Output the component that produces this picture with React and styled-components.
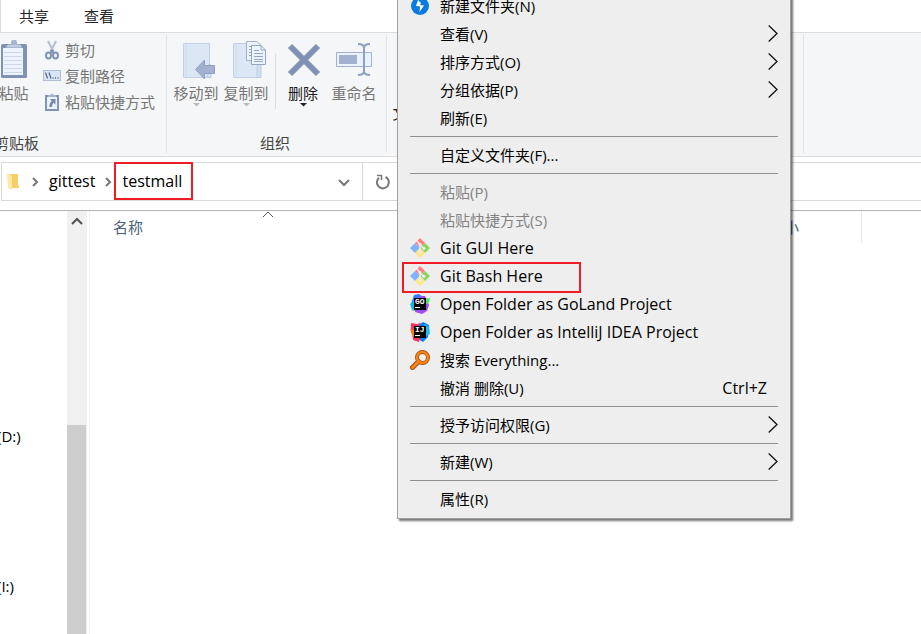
import React from "react";
import styled, { createGlobalStyle } from "styled-components";

const GlobalStyle = createGlobalStyle`
  *, *::before, *::after { box-sizing: border-box; }
  html, body, #root { height: 100%; }
  body {
    margin: 0;
    overflow: hidden;
    background: #fff;
    color: #000;
    font: 15px/20px "Open Sans", "Noto Sans CJK SC", sans-serif;
  }
  button {
    font: inherit;
    color: inherit;
    background: none;
    border: 0;
    padding: 0;
    margin: 0;
    text-align: left;
    white-space: nowrap;
  }
  svg { display: block; flex: none; }
`;

const Window = styled.div`
  position: relative;
  display: flex;
  flex-direction: column;
  height: 100%;
  overflow: hidden;
`;

const Tabs = styled.nav`
  display: flex;
  flex: none;
  gap: 35px;
  height: 33px;
  padding-left: 18px;
  border-left: 1px solid #dadbdc;
  border-bottom: 1px solid #dadbdc;
  color: #262626;
`;

const Tab = styled.button`
  height: 32px;
`;

const Ribbon = styled.div`
  display: flex;
  flex: none;
  height: 124px;
  padding: 2px 0 3px;
  background: #f5f6f7;
  border-bottom: 1px solid #dadbdc;
`;

const Group = styled.section`
  display: flex;
  flex-direction: column;
  justify-content: space-between;
  flex: none;
  width: ${(p) => p.$width}px;
  margin-left: ${(p) => (p.$cut ? -6 : 0)}px;
  border-right: 1px solid #e2e3e4;
`;

const GroupBody = styled.div`
  display: flex;
  justify-content: ${(p) => (p.$spread ? "space-between" : "flex-start")};
  padding: 3px ${(p) => (p.$spread ? 11 : 3)}px 0 3px;
`;

const GroupLabel = styled.div`
  height: 20px;
  padding-right: 3px;
  color: #444;
  text-align: ${(p) => (p.$start ? "left" : "center")};
`;

const LargeButton = styled.button`
  display: flex;
  flex-direction: column;
  align-items: center;
  width: ${(p) => p.$width}px;
  margin-left: ${(p) => p.$gap || 0}px;
  color: ${(p) => (p.$active ? "#1a1a1a" : "#767676")};
  svg:first-child { margin: 2px 0 4px; }
`;

const LargeLabel = styled.span`
  height: 20px;
`;

const SmallList = styled.div`
  display: flex;
  flex-direction: column;
  gap: 6px;
  margin: 2px 0 0 13px;
`;

const SmallButton = styled.button`
  display: flex;
  align-items: center;
  gap: 4px;
  height: 20px;
  color: #767676;
`;

const Rule = styled.div`
  width: 1px;
  height: 55px;
  margin: 16px 0 0 4px;
  background: #dcdddf;
`;

const AddressRow = styled.div`
  display: flex;
  flex: none;
  height: 39px;
  margin: 5px 0 9px 1px;
  border: 1px solid #d9d9d9;
  border-right: 0;
`;

const AddressBar = styled.div`
  display: flex;
  align-items: center;
  width: 361px;
  padding: 0 13px 0 5px;
  border-right: 1px solid #d9d9d9;
`;

const Crumbs = styled.div`
  display: flex;
  flex: 1;
  align-items: center;
  height: 37px;
  padding-left: 10px;
  font-size: 16px;
`;

const Crumb = styled.button`
  align-self: flex-start;
  height: 36px;
  padding: 0 9px 0 8px;
`;

const MarkedCrumb = styled(Crumb)`
  width: 79px;
  height: 38px;
  padding: 0 6px;
  margin-top: -1px;
  border: 2px solid #ee1c24;
`;

const RefreshButton = styled.button`
  padding-left: 12px;
`;

const Content = styled.main`
  display: flex;
  flex: 1;
  min-height: 0;
  border-top: 1px solid #b4b4b4;
`;

const Tree = styled.ul`
  display: flex;
  flex-direction: column;
  gap: 130px;
  width: 67px;
  margin: 0;
  padding: 215px 0 0;
  list-style: none;
`;

const TreeItem = styled.li`
  height: 20px;
  margin-left: -3px;
`;

const ScrollTrack = styled.div`
  display: flex;
  flex-direction: column;
  align-items: flex-start;
  width: 20px;
  background: #f0f0f0;
`;

const ScrollUp = styled.button`
  display: grid;
  place-items: center;
  width: 19px;
  height: 20px;
`;

const ScrollThumb = styled.div`
  flex: 1;
  width: 19px;
  margin-top: 194px;
  background: #cdcdcd;
`;

const FilePane = styled.div`
  flex: 1;
  margin-left: 2px;
  border-left: 1px solid #f0f0f0;
`;

const Columns = styled.div`
  display: flex;
  height: 32px;
`;

const Column = styled.button`
  display: flex;
  align-items: center;
  flex: none;
  width: ${(p) => p.$width}px;
  padding-left: ${(p) => p.$pad}px;
  border-right: 1px solid ${(p) => (p.$last ? "#e5e5e5" : "transparent")};
  color: #4c607a;
`;

const SortMark = styled.span`
  align-self: flex-start;
  margin: -2px 0 0 120px;
`;

const Menu = styled.div`
  position: absolute;
  top: -9px;
  left: 397px;
  width: 394px;
  padding: 0 0 5px;
  background: #eee;
  border: 1px solid #a0a0a0;
  box-shadow: 2px 2px 2px rgba(0, 0, 0, 0.55);
`;

const MenuItem = styled.button`
  display: grid;
  grid-template-columns: 20px 1fr auto;
  align-items: center;
  column-gap: 10px;
  width: 100%;
  height: 28px;
  padding: 0 12px;
  font-size: ${(p) => (p.$latin ? 16 : 15)}px;
  color: ${(p) => (p.disabled ? "#838383" : "#000")};
`;

const Marked = styled.div`
  width: 179px;
  height: 31px;
  margin: 0 0 -3px 4px;
  border: 2px solid #ee1c24;
  ${MenuItem} {
    height: 24px;
    padding: 0 6px;
  }
`;

const Shortcut = styled.span`
  padding-right: 11px;
  font-size: 16px;
`;

const Separator = styled.hr`
  height: 1px;
  margin: 4px 12px;
  border: 0;
  background: #919191;
`;

const Drop = ({ dark }) => (
  <svg width="8" height="4" viewBox="0 0 8 4"><path d="M1 0h7L4.500 3.500z" fill={dark ? "#222" : "#bbb"} /></svg>
);

const Chevron = ({ dir, size = 10, color = "#777", weight = 2 }) => {
  const d = { right: "M2 1l4 4-4 4", down: "M0 3l5 5 5-5", up: "M0 8l5-5 5 5" }[dir];
  return (
    <svg width={size} height={size} viewBox="0 0 10 10" overflow="visible">
      <path d={d} fill="none" stroke={color} strokeWidth={weight} />
    </svg>
  );
};

const MenuArrow = () => (
  <svg width="10" height="18" viewBox="0 0 10 18">
    <path d="M.7.500l8.300 8-8.300 8" fill="none" stroke="#111" strokeWidth="1.300" />
  </svg>
);

const PasteIcon = () => (
  <svg width="28" height="39" viewBox="0 0 28 39">
    <rect x="1" y="4" width="26" height="34" rx="1.500" fill="#7f92b5" />
    <path d="M3 8h20v27H3z" fill="#eef4fd" />
    <path d="M4 12.500h18M4 16.500h18M4 20.500h18M4 24.500h18M4 28.500h18M4 32.500h18" stroke="#cbd7ea" />
    <path d="M6 8c0-3 3-4 5-4V2.500a3 3 0 0 1 6 0V4c3 0 5 1 5 4z" fill="#a6b5d0" />
    <path d="M7 6h14" stroke="#dce5f3" />
  </svg>
);

const CutIcon = () => (
  <svg width="18" height="20" viewBox="0 0 18 20">
    <path d="M5 1l5.500 11M13 1L7.500 12" stroke="#b3bfd3" strokeWidth="2" />
    <path d="M7.500 10l3 3M10.500 10l-3 3" stroke="#8193b4" strokeWidth="2" />
    <ellipse cx="5.500" cy="15.500" rx="2.500" ry="3" fill="none" stroke="#8193b4" strokeWidth="2" />
    <ellipse cx="12.500" cy="15.500" rx="2.500" ry="3" fill="none" stroke="#8193b4" strokeWidth="2" />
  </svg>
);

const PathIcon = () => (
  <svg width="18" height="12" viewBox="0 0 18 12">
    <rect x=".5" y=".5" width="17" height="10" fill="#d9e5f5" stroke="#afbdd5" />
    <path d="M2.500 2.500l2 6M6 2.500l2 6" stroke="#53658a" strokeWidth="1.200" />
    <path d="M9.500 8h1M12 8h1M14.500 8h1" stroke="#53658a" strokeWidth="1.400" />
  </svg>
);

const PasteLinkIcon = () => (
  <svg width="18" height="20" viewBox="0 0 18 20">
    <path d="M2 3h14v16H2z" fill="#8193b4" />
    <path d="M4 5h10v12H4z" fill="#edf3fc" />
    <path d="M5 5V3h2.500a1.500 1.500 0 0 1 3 0H13v2z" fill="#a4b2cd" />
    <path d="M7 7h5.500v5.500l-1.800-1.800c-1.200 1-1.400 2.300-1.700 4.300H6.500c-.5-2.500.5-4.500 2.200-6z" fill="#7488ae" />
  </svg>
);

const Folder = () => (
  <>
    <path d="M1.500 3.500h26v34h-26z" fill="#dce6f5" stroke="#c3d0e5" />
    <path d="M4 4v33" stroke="#cdd9eb" />
    <path d="M25 26c2-2 4-2 4 0v11.500h-4z" fill="#d3dff0" stroke="#bccae0" />
  </>
);

const MoveIcon = () => (
  <svg width="40" height="39" viewBox="-6 0 40 39">
    <Folder />
    <path d="M13.500 29.500L22.500 20v5.500h10v8h-10V39z" fill="#a2b1cf" stroke="#8fa1c3" />
  </svg>
);

const CopyIcon = () => (
  <svg width="40" height="39" viewBox="-6 0 40 39">
    <Folder />
    <path d="M14.500 1.500H25l4 4v15H14.500z" fill="#edf3fc" stroke="#9fb0cd" />
    <path d="M17 6.500h7M17 9.500h5M17 12.500h5M17 15.500h5" stroke="#94a6c6" />
    <path d="M19.500 5.500H29l4.500 4.500v14.500h-14z" fill="#edf3fc" stroke="#93a5c5" />
    <path d="M29 6v4h4M22 10.500h5M22 13.500h9M22 16.500h9M22 19.500h9M22 21.500h9" fill="none" stroke="#94a6c6" />
  </svg>
);

const DeleteIcon = () => (
  <svg width="36" height="39" viewBox="-2 0 36 39">
    <path d="M3 6l28 28M31 6L3 34" stroke="#8092b4" strokeWidth="6" />
  </svg>
);

const RenameIcon = () => (
  <svg width="38" height="39" viewBox="0 0 38 39">
    <path d="M1.500 12.500h35v14h-35z" fill="#e9f2fd" stroke="#a2b2ce" />
    <path d="M4 15h18v9H4z" fill="#a2b1cf" />
    <path d="M23 4c3 0 6 1 6 4 0-3 3-4 6-4M29 7v26M23 35c3 0 6-1 6-4 0 3 3 4 6 4" fill="none" stroke="#8da0c0" strokeWidth="2" />
  </svg>
);

const NewFolderIcon = () => (
  <svg width="32" height="39" viewBox="0 0 32 39"><path d="M2 5h24v31H2z" fill="#f6d777" /></svg>
);

const SelectIcon = () => (
  <svg width="18" height="18" viewBox="0 0 18 18">
    <path d="M1.500 1.500h15v15h-15z" fill="#d6e9f5" stroke="#4b86a8" strokeDasharray="1 2" />
  </svg>
);

const SmallFolder = () => (
  <svg width="14" height="17" viewBox="0 0 14 17">
    <path d="M2 1h9v11l1 1v2H4z" fill="#f5ce69" />
    <path d="M0 1h3l2 3v13l-4-2z" fill="#ffe8a2" />
  </svg>
);

const RefreshIcon = () => (
  <svg width="16" height="16" viewBox="0 0 16 16">
    <path d="M10.500 3a6 6 0 1 1-6.500.800" fill="none" stroke="#777" strokeWidth="2" />
    <path d="M2 1.500h4.500V6" fill="none" stroke="#777" strokeWidth="1.500" />
  </svg>
);

const BoltIcon = () => (
  <svg width="20" height="20" viewBox="0 0 20 20">
    <circle cx="10" cy="10" r="9" fill="#0b7be0" />
    <path d="M8 4l-2 6 4 .5L9.500 16 14 9.500l-4-.5 1-2z" fill="#fff" />
  </svg>
);

const GitIcon = () => (
  <svg width="20" height="20" viewBox="0 0 20 20">
    <path d="M10 0l5 5-5 5-5-5z" fill="#ff8080" />
    <path d="M5 5l5 5-5 5-5-5z" fill="#80b3ff" />
    <path d="M15 5l5 5-5 5-5-5z" fill="#8dd35f" />
    <path d="M10 10l5 5-5 5-5-5z" fill="#ffe680" />
    <path d="M6.500 2.500l3.500 4v7M10 7l4 3.500" fill="none" stroke="#eee" strokeWidth="1.400" />
    <circle cx="10" cy="6.500" r="1.600" fill="#eee" />
    <circle cx="10" cy="14" r="1.600" fill="#eee" />
    <circle cx="13.800" cy="10.300" r="1.600" fill="#eee" />
  </svg>
);

const Letters = styled.text`
  font: 700 8px "Liberation Mono", monospace;
  fill: #fff;
`;

const GoLandIcon = () => (
  <svg width="20" height="20" viewBox="0 0 20 20">
    <path d="M4 1l5-1 4 3-5 8-7-1z" fill="#2f7df6" />
    <path d="M0 10l4-3 4 11-6-2z" fill="#16b8d8" />
    <path d="M10 2l5 0 4 9-2 6-5 3-7-2z" fill="#a14bf2" />
    <path d="M15 5l5-1-2 6-3-1z" fill="#3bea62" />
    <path d="M4 4h12v12H4z" fill="#000" />
    <Letters x="5" y="10">GO</Letters>
    <path d="M5 13.500h5" stroke="#fff" />
  </svg>
);

const IdeaIcon = () => (
  <svg width="20" height="20" viewBox="0 0 20 20">
    <path d="M1 1l6 1 4-1-4 10-6-3z" fill="#fe315d" />
    <path d="M0 7l6 1 2 9-5 0-1-4z" fill="#f97a12" />
    <path d="M9 3l4-3 6 3-1 12-5 5-5-3z" fill="#087cfa" />
    <path d="M3 14l7 2-1 4-6-2z" fill="#fe315d" />
    <path d="M14 2l5 2 1 8-4 2z" fill="#21b8f5" />
    <path d="M4 4h12v12H4z" fill="#000" />
    <Letters x="5" y="10">IJ</Letters>
    <path d="M5 13.500h5" stroke="#fff" />
  </svg>
);

const SearchIcon = () => (
  <svg width="20" height="20" viewBox="0 0 20 20">
    <path d="M8.500 11.500L2.500 17.500" stroke="#a85410" strokeWidth="5" strokeLinecap="round" />
    <circle cx="12.500" cy="7.500" r="5.500" fill="none" stroke="#a85410" strokeWidth="4" />
    <path d="M8.500 11.500L2.500 17.500" stroke="#ff8416" strokeWidth="2.600" strokeLinecap="round" />
    <circle cx="12.500" cy="7.500" r="5.500" fill="none" stroke="#ff8416" strokeWidth="2.200" />
  </svg>
);

const Item = ({ icon, label, arrow, shortcut, disabled, latin }) => (
  <MenuItem type="button" role="menuitem" disabled={disabled} $latin={latin}>
    <span>{icon}</span>
    <span>{label}</span>
    {arrow && <MenuArrow />}
    {shortcut && <Shortcut>{shortcut}</Shortcut>}
  </MenuItem>
);

const Large = ({ icon, label, width, gap, active, drop }) => (
  <LargeButton type="button" $width={width} $gap={gap} $active={active}>
    {icon}
    <LargeLabel>{label}</LargeLabel>
    {drop && <Drop dark={active} />}
  </LargeButton>
);

export default function App() {
  return (
    <Window lang="zh-CN">
      <GlobalStyle />
      <Tabs>
        <Tab type="button">共享</Tab>
        <Tab type="button">查看</Tab>
      </Tabs>
      <Ribbon>
        <Group $width={173} $cut>
          <GroupBody>
            <Large icon={<PasteIcon />} label="粘贴" width={33} />
            <SmallList>
              <SmallButton type="button"><CutIcon />剪切</SmallButton>
              <SmallButton type="button"><PathIcon />复制路径</SmallButton>
              <SmallButton type="button"><PasteLinkIcon />粘贴快捷方式</SmallButton>
            </SmallList>
          </GroupBody>
          <GroupLabel $start>剪贴板</GroupLabel>
        </Group>
        <Group $width={220}>
          <GroupBody>
            <Large icon={<MoveIcon />} label="移动到" width={50} gap={1} drop />
            <Large icon={<CopyIcon />} label="复制到" width={50} drop />
            <Rule />
            <Large icon={<DeleteIcon />} label="删除" width={46} gap={4} active drop />
            <Large icon={<RenameIcon />} label="重命名" width={50} gap={3} />
          </GroupBody>
          <GroupLabel>组织</GroupLabel>
        </Group>
        <Group $width={417}>
          <GroupBody $spread>
            <LargeButton type="button" $width={50} $active>
              <NewFolderIcon />
              <LargeLabel>新建</LargeLabel>
              <LargeLabel>文件夹</LargeLabel>
            </LargeButton>
            <SmallList>
              <SmallButton type="button" aria-label="全部选择"><SelectIcon /></SmallButton>
              <SmallButton type="button" aria-label="全部取消"><SelectIcon /></SmallButton>
              <SmallButton type="button" aria-label="反向选择"><SelectIcon /></SmallButton>
            </SmallList>
          </GroupBody>
        </Group>
      </Ribbon>
      <AddressRow>
        <AddressBar>
          <SmallFolder />
          <Crumbs>
            <Chevron dir="right" />
            <Crumb type="button">gittest</Crumb>
            <Chevron dir="right" />
            <MarkedCrumb type="button">testmall</MarkedCrumb>
          </Crumbs>
          <Chevron dir="down" />
        </AddressBar>
        <RefreshButton type="button" aria-label="刷新"><RefreshIcon /></RefreshButton>
      </AddressRow>
      <Content>
        <Tree>
          <TreeItem>(D:)</TreeItem>
          <TreeItem>(I:)</TreeItem>
        </Tree>
        <ScrollTrack>
          <ScrollUp type="button" aria-label="向上滚动"><Chevron dir="up" color="#505050" /></ScrollUp>
          <ScrollThumb />
        </ScrollTrack>
        <FilePane>
          <Columns>
            <Column type="button" $width={350} $pad={23}>
              名称
              <SortMark><Chevron dir="up" color="#555" weight={1} /></SortMark>
            </Column>
            <Column type="button" $width={422} $pad={329} $last>大小</Column>
          </Columns>
        </FilePane>
      </Content>
      <Menu role="menu">
        <Item icon={<BoltIcon />} label="新建文件夹(N)" />
        <Item label="查看(V)" arrow />
        <Item label="排序方式(O)" arrow />
        <Item label="分组依据(P)" arrow />
        <Item label="刷新(E)" />
        <Separator />
        <Item label="自定义文件夹(F)..." />
        <Separator />
        <Item label="粘贴(P)" disabled />
        <Item label="粘贴快捷方式(S)" disabled />
        <Item icon={<GitIcon />} label="Git GUI Here" latin />
        <Marked><Item icon={<GitIcon />} label="Git Bash Here" latin /></Marked>
        <Item icon={<GoLandIcon />} label="Open Folder as GoLand Project" latin />
        <Item icon={<IdeaIcon />} label="Open Folder as IntelliJ IDEA Project" latin />
        <Item icon={<SearchIcon />} label="搜索 Everything..." />
        <Item label="撤消 删除(U)" shortcut="Ctrl+Z" />
        <Separator />
        <Item label="授予访问权限(G)" arrow />
        <Separator />
        <Item label="新建(W)" arrow />
        <Separator />
        <Item label="属性(R)" />
      </Menu>
    </Window>
  );
}
